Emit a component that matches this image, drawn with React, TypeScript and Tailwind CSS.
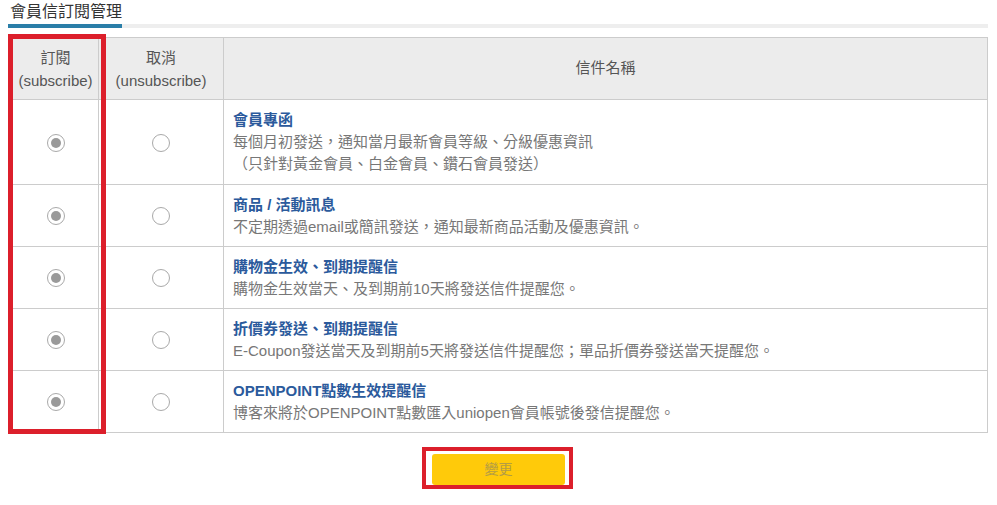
import type { ReactNode } from 'react';

const FONT = { fontFamily: '"Liberation Sans", "Noto Sans CJK TC", sans-serif' };

interface Letter {
  title: string;
  lines: ReactNode[];
}

const letters: Letter[] = [
  {
    title: '會員專函',
    lines: ['每個月初發送，通知當月最新會員等級、分級優惠資訊', '（只針對黃金會員、白金會員、鑽石會員發送）']
  },
  { title: '商品 / 活動訊息', lines: ['不定期透過email或簡訊發送，通知最新商品活動及優惠資訊。'] },
  { title: '購物金生效、到期提醒信', lines: ['購物金生效當天、及到期前10天將發送信件提醒您。'] },
  { title: '折價券發送、到期提醒信', lines: ['E-Coupon發送當天及到期前5天將發送信件提醒您；單品折價券發送當天提醒您。'] },
  { title: 'OPENPOINT點數生效提醒信', lines: ['博客來將於OPENPOINT點數匯入uniopen會員帳號後發信提醒您。'] }
];

function Radio({ checked }: { checked: boolean }) {
  return (
    <span className="inline-flex h-[18px] w-[18px] items-center justify-center rounded-full border border-[#a9a9a9] bg-white align-middle">
      {checked ? <span className="h-[10px] w-[10px] rounded-full bg-[#9a9a9a]" /> : null}
    </span>
  );
}

export default function App() {
  return (
    <div className="relative h-[505px] w-[997px] bg-white text-[15px]" style={FONT}>
      <div className="pl-[10px] pt-[3px]">
        <h1 className="text-[16px] leading-[18px] text-[#333]">會員信訂閱管理</h1>
      </div>
      <div className="ml-[8px] mt-[3px] flex h-[4px] w-[980px] bg-[#eeeeee]">
        <div className="h-full w-[114px] bg-[#2a7ea8]" />
      </div>

      <table className="ml-[12px] mt-[9px] w-[976px] table-fixed border-collapse">
        <thead>
          <tr className="h-[62px] bg-[#ececec] text-[#555]">
            <th className="w-[86px] border border-[#cccccc] font-normal leading-[23px]">
              訂閱
              <br />
              (subscribe)
            </th>
            <th className="w-[125px] border border-[#cccccc] font-normal leading-[23px]">
              取消
              <br />
              (unsubscribe)
            </th>
            <th className="border border-[#cccccc] font-normal">信件名稱</th>
          </tr>
        </thead>
        <tbody>
          {letters.map((item) => (
            <tr key={item.title} className={item.lines.length > 1 ? 'h-[85px]' : 'h-[62px]'}>
              <td className="border border-[#cccccc] p-0 text-center">
                <Radio checked />
              </td>
              <td className="border border-[#cccccc] p-0 text-center">
                <Radio checked={false} />
              </td>
              <td className="border border-[#cccccc] px-[9px] py-0 leading-[22px]">
                <div className="font-bold text-[#2b5a9c]">{item.title}</div>
                {item.lines.map((line, i) => (
                  <div key={i} className="text-[#777]">
                    {line}
                  </div>
                ))}
              </td>
            </tr>
          ))}
        </tbody>
      </table>

      <div className="mt-[21px] flex justify-center">
        <div className="relative">
          <button
            type="button"
            className="h-[31px] w-[133px] rounded-[3px] bg-[#ffca0a] text-[14px] text-[#b49c45]"
            style={FONT}
          >
            變更
          </button>
          <div className="pointer-events-none absolute left-[-10px] top-[-7px] h-[42px] w-[151px] border-4 border-[#dc1f2b]" />
        </div>
      </div>

      <div className="pointer-events-none absolute left-[8px] top-[34px] h-[400px] w-[98px] border-[5px] border-[#dc1f2b]" />
    </div>
  );
}
